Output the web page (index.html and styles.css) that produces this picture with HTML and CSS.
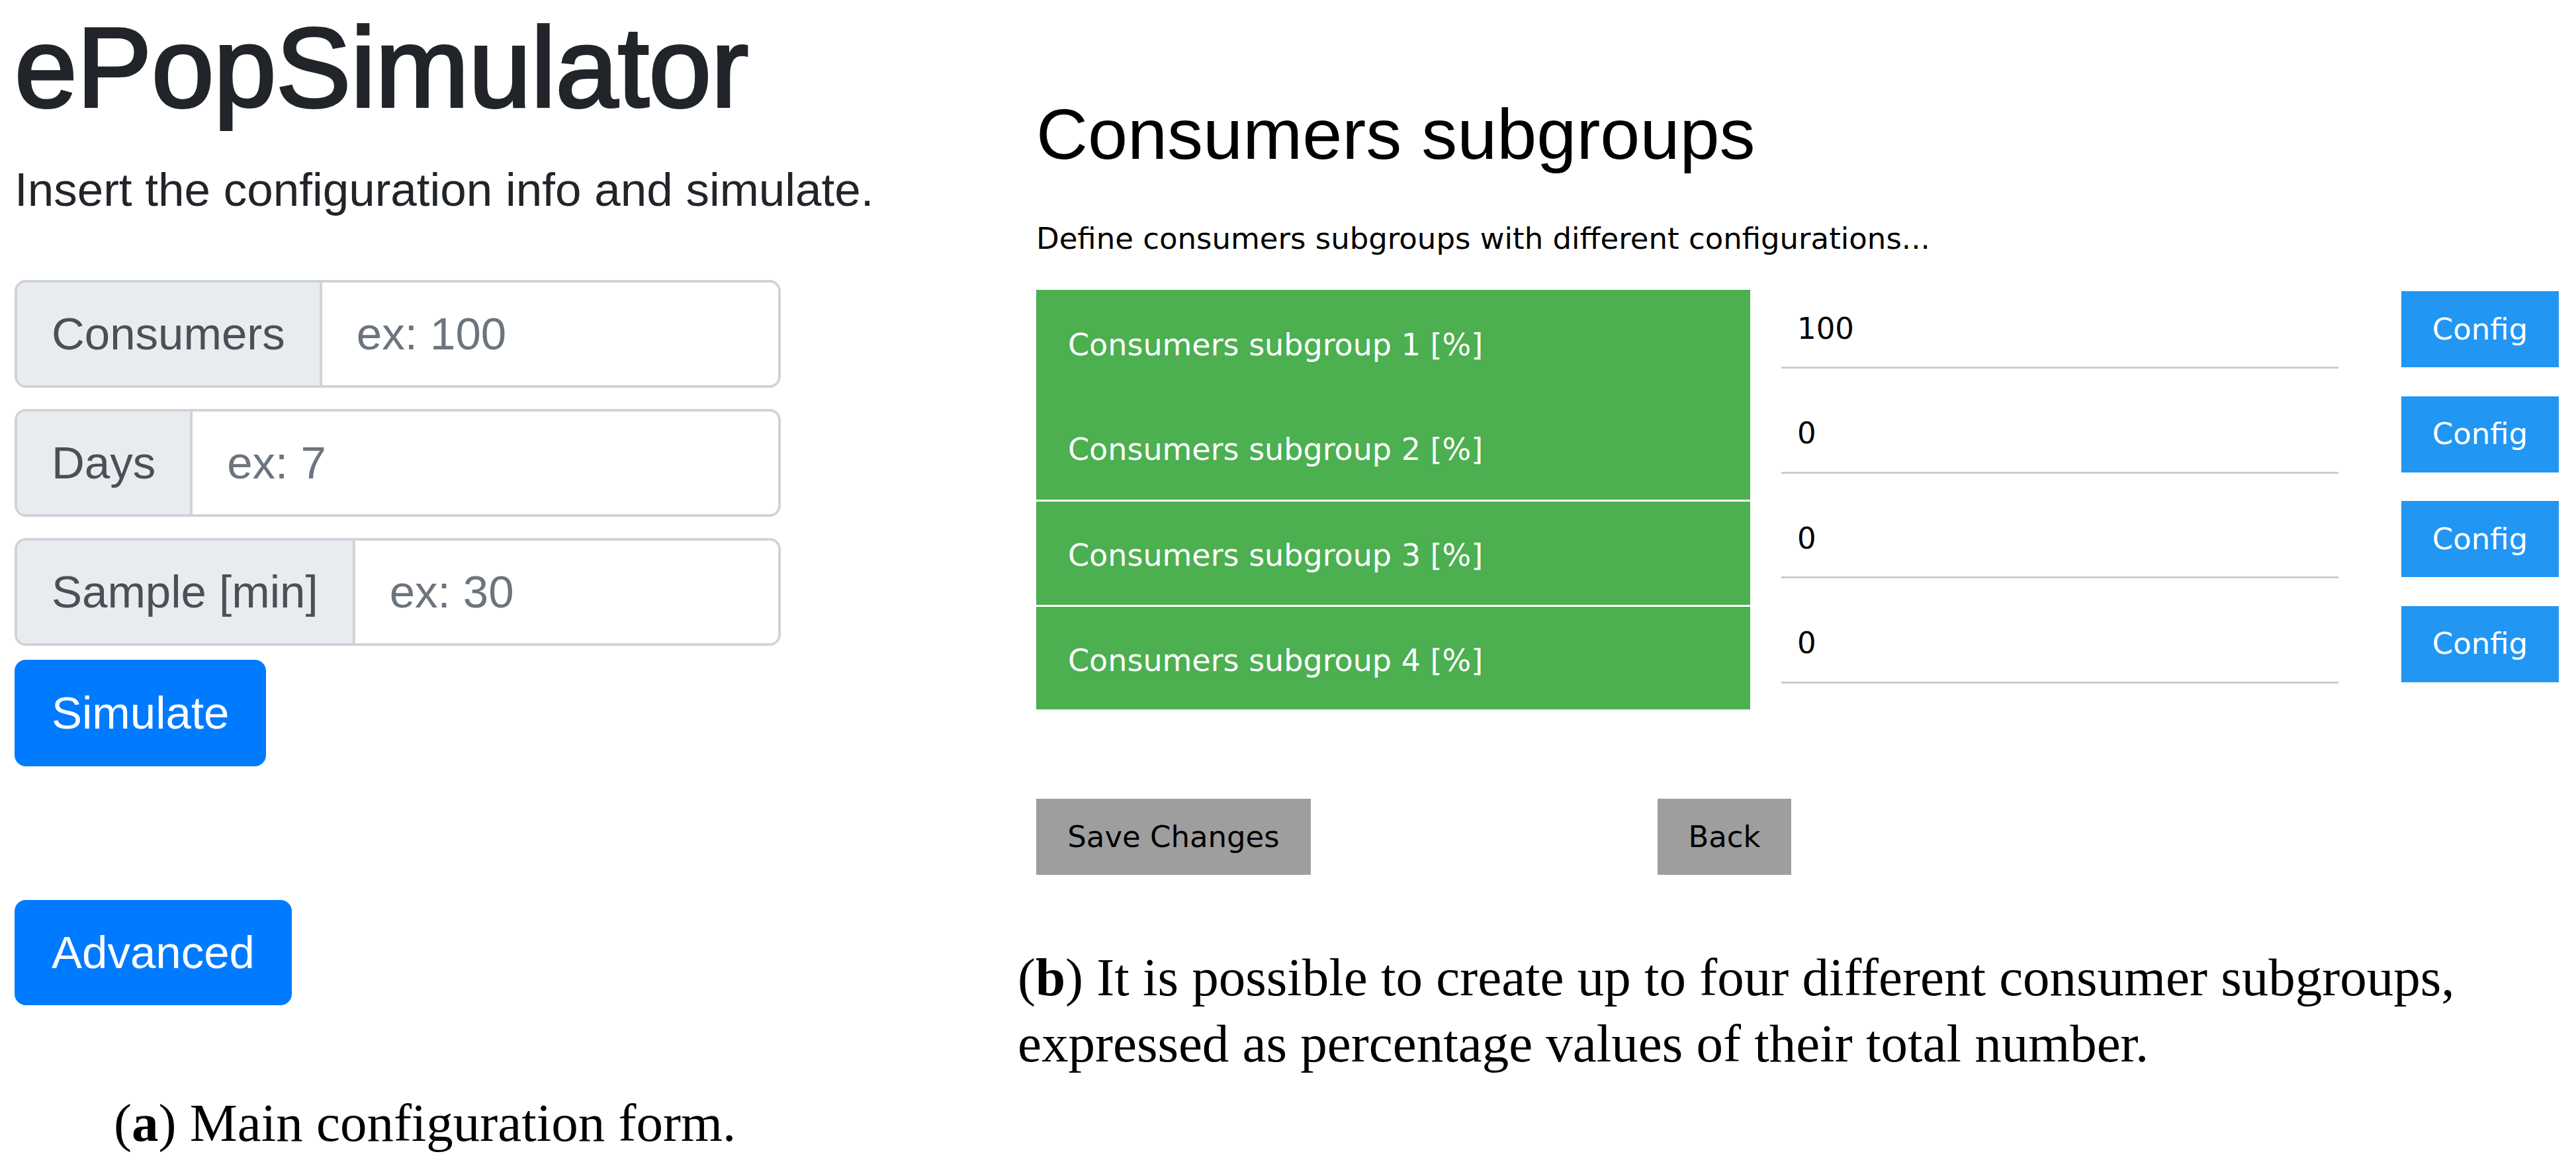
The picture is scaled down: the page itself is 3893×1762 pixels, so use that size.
FILE: index.html
```html
<!DOCTYPE html>
<html lang="en">
<head>
<meta charset="utf-8">
<title>ePopSimulator figures</title>
<link rel="stylesheet" href="styles.css">
</head>
<body>
<div class="page">
  <section class="fig fig-a">
    <div class="app-a">
      <h1 class="brand">ePopSimulator</h1>
      <p class="lead">Insert the configuration info and simulate.</p>
      <div class="igroup">
        <span class="addon">Consumers</span>
        <span class="field">ex: 100</span>
      </div>
      <div class="igroup">
        <span class="addon">Days</span>
        <span class="field">ex: 7</span>
      </div>
      <div class="igroup igroup-last">
        <span class="addon">Sample [min]</span>
        <span class="field">ex: 30</span>
      </div>
      <button class="btn btn-sim" type="button">Simulate</button>
      <button class="btn btn-adv" type="button">Advanced</button>
    </div>
    <p class="caption caption-a">(<b>a</b>) Main configuration form.</p>
  </section>

  <section class="fig fig-b">
    <div class="app-b">
      <h2 class="sg-title">Consumers subgroups</h2>
      <p class="sg-desc">Define consumers subgroups with different configurations...</p>
      <div class="sg-table">
        <div class="sg-row">
          <div class="sg-label">Consumers subgroup 1 [%]</div>
          <div class="sg-input">100</div>
          <div class="sg-btn">Config</div>
        </div>
        <div class="sg-row">
          <div class="sg-label">Consumers subgroup 2 [%]</div>
          <div class="sg-input">0</div>
          <div class="sg-btn">Config</div>
        </div>
        <div class="sg-row sg-row-sep">
          <div class="sg-label">Consumers subgroup 3 [%]</div>
          <div class="sg-input">0</div>
          <div class="sg-btn">Config</div>
        </div>
        <div class="sg-row sg-row-sep">
          <div class="sg-label">Consumers subgroup 4 [%]</div>
          <div class="sg-input">0</div>
          <div class="sg-btn">Config</div>
        </div>
      </div>
      <div class="sg-actions">
        <button class="gbtn gbtn-save" type="button">Save Changes</button>
        <button class="gbtn gbtn-back" type="button">Back</button>
      </div>
    </div>
    <p class="caption caption-b">(<b>b</b>) It is possible to create up to four different consumer subgroups,<br>expressed as percentage values of their total number.</p>
  </section>
</div>
</body>
</html>
```

FILE: styles.css
```css
* { box-sizing: border-box; }

html, body {
  margin: 0;
  padding: 0;
  background: #ffffff;
}

.page {
  display: flex;
  align-items: flex-start;
  width: 3893px;
  height: 1762px;
  overflow: hidden;
}

/* ---------- Figure (a) ---------- */
.fig-a {
  flex: 0 0 1538px;
  display: flex;
  flex-direction: column;
}

.app-a {
  display: flex;
  flex-direction: column;
  align-items: flex-start;
  padding-left: 22px;
  font-family: "Liberation Sans", Arial, Helvetica, sans-serif;
  color: #212529;
}

.brand {
  margin: 0;
  font-size: 170px;
  line-height: 204px;
  font-weight: 400;
  color: #212529;
  -webkit-text-stroke: 4px #212529;
  letter-spacing: -0.5px;
}

.lead {
  margin: 30px 0 0 0;
  font-size: 71px;
  line-height: 105px;
  color: #212529;
}

.igroup {
  display: flex;
  width: 1158px;
  height: 163px;
  margin-top: 0;
  margin-bottom: 32px;
  border: 4px solid #ced4da;
  border-radius: 17px;
  overflow: hidden;
  font-size: 69px;
}

.lead + .igroup { margin-top: 84px; }

.igroup-last { margin-bottom: 21px; }

.addon {
  display: flex;
  align-items: center;
  padding: 0 52px;
  background: #e9ecef;
  color: #495057;
  border-right: 4px solid #ced4da;
  white-space: nowrap;
}

.field {
  flex: 1;
  display: flex;
  align-items: center;
  padding: 0 52px;
  background: #ffffff;
  color: #6c757d;
}

.btn {
  display: flex;
  align-items: center;
  justify-content: center;
  height: 161px;
  padding: 0 52px;
  border: 4px solid #007bff;
  border-radius: 17px;
  background: #007bff;
  color: #ffffff;
  font-family: "Liberation Sans", Arial, Helvetica, sans-serif;
  font-size: 69px;
  font-weight: 400;
}

.btn-adv {
  margin-top: 202px;
  height: 159px;
}

.caption {
  font-family: "Liberation Serif", "Times New Roman", serif;
  font-size: 81px;
  line-height: 100px;
  color: #000000;
  margin: 0;
  white-space: nowrap;
}

.caption b { font-weight: 700; }

.caption-a {
  margin-top: 128px;
  padding-left: 172px;
}

/* ---------- Figure (b) ---------- */
.fig-b {
  flex: 1 1 auto;
  display: flex;
  flex-direction: column;
}

.app-b {
  padding-left: 28px;
  font-family: "DejaVu Sans", Verdana, sans-serif;
  font-size: 45px;
  line-height: 67.5px;
  color: #000000;
}

.sg-title {
  margin: 138px 0 0 0;
  font-family: "Liberation Sans", Arial, sans-serif;
  font-size: 108px;
  line-height: 129.6px;
  font-weight: 400;
  color: #000000;
}

.sg-desc {
  margin: 59px 0 0 0;
  font-size: 45px;
  line-height: 67.5px;
}

.sg-table {
  margin-top: 44px;
  display: flex;
  flex-direction: column;
}

.sg-row {
  display: flex;
  align-items: flex-start;
  height: 158.5px;
}

.sg-label {
  flex: 0 0 1079px;
  height: 158.5px;
  display: flex;
  align-items: center;
  padding: 8px 0 0 48px;
  background: #4caf50;
  color: #ffffff;
  font-size: 46px;
  white-space: nowrap;
}

.sg-row-sep .sg-label {
  border-top: 3px solid #ffffff;
}

.sg-input {
  flex: 0 0 842px;
  margin-left: 47px;
  margin-top: 0.5px;
  padding: 24px;
  border-bottom: 3px solid #cccccc;
  color: #000000;
  height: 118.5px;
}

.sg-btn {
  flex: 0 0 238px;
  margin-left: 95px;
  margin-top: 2px;
  height: 115px;
  display: flex;
  align-items: center;
  justify-content: center;
  background: #2196f3;
  color: #ffffff;
}

.sg-actions {
  display: flex;
  margin-top: 135px;
}

.gbtn {
  height: 115px;
  padding: 0;
  border: none;
  background: #9e9e9e;
  color: #000000;
  font-family: "DejaVu Sans", Verdana, sans-serif;
  font-size: 45px;
  line-height: 67.5px;
  display: flex;
  align-items: center;
  justify-content: center;
}

.gbtn-save { width: 415px; }

.gbtn-back {
  width: 202px;
  margin-left: 524px;
}

.caption-b {
  margin-top: 105px;
}
```
